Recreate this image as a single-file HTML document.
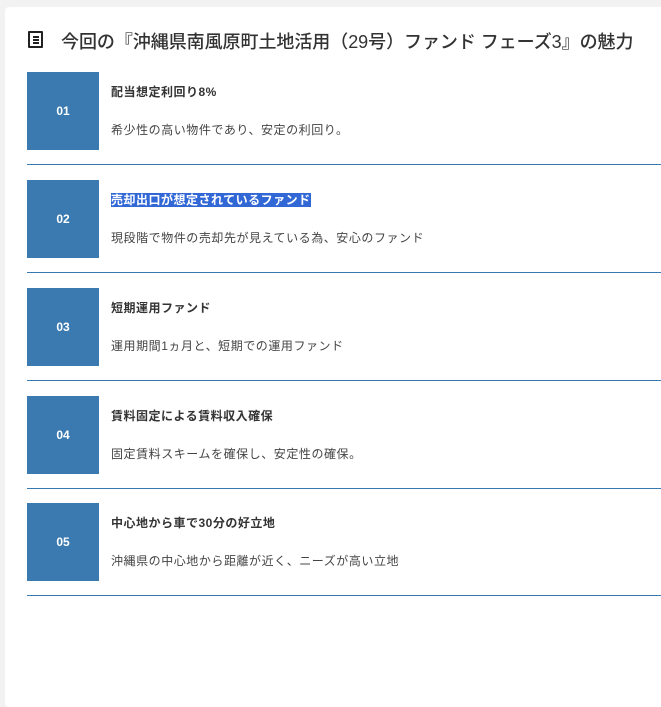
<!DOCTYPE html>
<html><head><meta charset="utf-8"><style>
body{margin:0;background:#f2f2f2;font-family:"Liberation Sans","Noto Sans CJK JP",sans-serif;width:661px;height:607px;overflow:hidden}
.card{position:absolute;left:5px;top:7px;width:700px;height:700px;background:#fff;border-radius:4px}
.h{position:absolute;left:61px;top:28px;font-size:18px;color:#333;font-weight:500;white-space:nowrap;letter-spacing:-0.05px}
.ic{position:absolute;left:28px;top:31px;width:15px;height:17px;border:2px solid #222;border-radius:1px;box-sizing:border-box}
.ic i{position:absolute;left:2.5px;width:6px;height:1.5px;background:#222}
.it{position:absolute;left:27px;width:700px;height:92px;border-bottom:1.5px solid #3a78b0}
.box{position:absolute;left:0;top:0;width:72px;height:78px;background:#3a7ab0;color:#fff;font-weight:bold;font-size:12px;text-align:center;line-height:78px}
.t{position:absolute;left:84px;top:12px;font-size:12px;font-weight:bold;color:#333;white-space:nowrap;line-height:16px;letter-spacing:0.5px}
.d{position:absolute;left:84px;top:50px;font-size:12px;color:#444;white-space:nowrap;line-height:16px;letter-spacing:0.55px}
.sel{background:#3268d6;color:#fff}
</style></head><body>
<div class="card"></div>
<div class="ic"><i style="top:3px"></i><i style="top:6px"></i><i style="top:9px"></i></div>
<div class="h">今回の『沖縄県南風原町土地活用（29号）ファンド フェーズ3』の魅力</div>
<div class="it" style="top:72px"><div class="box">01</div><div class="t">配当想定利回り8%</div><div class="d">希少性の高い物件であり、安定の利回り。</div></div>
<div class="it" style="top:180px"><div class="box">02</div><div class="t"><span class="sel">売却出口が想定されているファンド</span></div><div class="d">現段階で物件の売却先が見えている為、安心のファンド</div></div>
<div class="it" style="top:288px"><div class="box">03</div><div class="t">短期運用ファンド</div><div class="d">運用期間1ヵ月と、短期での運用ファンド</div></div>
<div class="it" style="top:396px"><div class="box">04</div><div class="t">賃料固定による賃料収入確保</div><div class="d">固定賃料スキームを確保し、安定性の確保。</div></div>
<div class="it" style="top:503px"><div class="box">05</div><div class="t">中心地から車で30分の好立地</div><div class="d">沖縄県の中心地から距離が近く、ニーズが高い立地</div></div>
</body></html>
